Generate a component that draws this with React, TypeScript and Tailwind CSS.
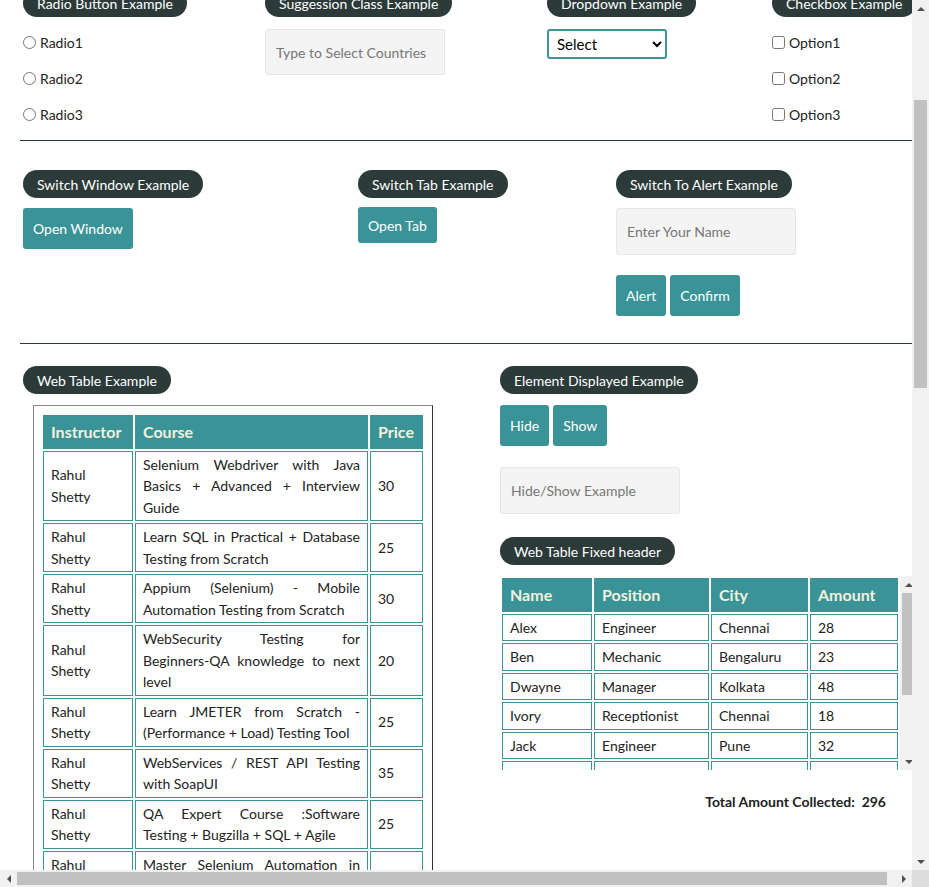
import type { ReactNode } from 'react';

const courses: [string, number][] = [
  ['Selenium Webdriver with Java Basics + Advanced + Interview Guide', 30],
  ['Learn SQL in Practical + Database Testing from Scratch', 25],
  ['Appium (Selenium) - Mobile Automation Testing from Scratch', 30],
  ['WebSecurity Testing for Beginners\u2011QA knowledge to next level', 20],
  ['Learn JMETER from Scratch - (Performance + Load) Testing Tool', 25],
  ['WebServices / REST API Testing with SoapUI', 35],
  ['QA Expert Course :Software Testing + Bugzilla + SQL + Agile', 25],
  ['Master Selenium Automation in simple Python Language', 25],
  ['Advanced Selenium Framework Pageobject, TestNG, Maven, Cucumber', 20],
];

const people: [string, string, string, number][] = [
  ['Alex', 'Engineer', 'Chennai', 28],
  ['Ben', 'Mechanic', 'Bengaluru', 23],
  ['Dwayne', 'Manager', 'Kolkata', 48],
  ['Ivory', 'Receptionist', 'Chennai', 18],
  ['Jack', 'Engineer', 'Pune', 32],
  ['Joe', 'Postman', 'Chennai', 46],
  ['Raymond', 'Businessman', 'Mumbai', 37],
];

function Pill({ children }: { children: ReactNode }) {
  return (
    <div className="inline-flex h-[28px] items-center whitespace-nowrap rounded-full bg-[#2c3a3a] px-[14px] text-white">
      {children}
    </div>
  );
}

function Btn({ children, h = 'h-[41px]' }: { children: ReactNode; h?: string }) {
  return (
    <button className={`${h} rounded-[3px] bg-[#3a9396] px-[10px] text-white`}>{children}</button>
  );
}

function Field({ placeholder, h = 'h-[47px]' }: { placeholder: string; h?: string }) {
  return (
    <input
      placeholder={placeholder}
      className={`${h} w-[180px] rounded-[3px] border border-[#e6e6e6] bg-[#f4f4f4] px-[10px] outline-none placeholder:text-[#777]`}
    />
  );
}

function Arrow({ dir }: { dir: 'up' | 'down' | 'left' | 'right' }) {
  const pts = {
    up: '0,4 4,0 8,4',
    down: '0,0 8,0 4,4',
    left: '4,0 4,8 0,4',
    right: '0,0 4,4 0,8',
  }[dir];
  const vertical = dir === 'up' || dir === 'down';
  return (
    <div className="flex h-[17px] w-[17px] shrink-0 items-center justify-center">
      <svg width={vertical ? 8 : 4} height={vertical ? 4 : 8}>
        <polygon points={pts} fill="#505050" />
      </svg>
    </div>
  );
}

const cell = 'border border-[#3a9396] px-[7px] py-[2px] leading-[21.5px]';
const head = 'border border-[#3a9396] bg-[#3a9396] px-[7px] py-[5px] text-left text-[16px] font-bold leading-[21.5px] text-[#f5f0dc]';

export default function App() {
  return (
    <div className="flex h-[887px] w-[929px] flex-col overflow-hidden bg-white font-['Lato',sans-serif] text-[14px] text-[#222]">
      <div className="flex h-[870px]">
        <div className="w-[912px] overflow-hidden">
          <div className="-mt-[11px] w-[1000px]">
            {/* Radio / Suggestion / Dropdown / Checkbox */}
            <div className="flex h-[151px] pl-[23px]">
              <div className="w-[242px]">
                <Pill>Radio Button Example</Pill>
                <div className="mt-[7px]">
                  {['Radio1', 'Radio2', 'Radio3'].map((r) => (
                    <label key={r} className="flex h-[36px] items-center gap-[4px]">
                      <input type="radio" name="radio" className="m-0 h-[13px] w-[13px]" />
                      {r}
                    </label>
                  ))}
                </div>
              </div>
              <div className="w-[282px]">
                <Pill>Suggession Class Example</Pill>
                <div className="mt-[12px]">
                  <Field placeholder="Type to Select Countries" h="h-[46px]" />
                </div>
              </div>
              <div className="w-[225px]">
                <Pill>Dropdown Example</Pill>
                <div className="mt-[12px]">
                  <select className="h-[30px] w-[120px] rounded-[3px] border-2 border-[#3a9396] bg-white pl-[4px] text-[15px] text-black">
                    <option>Select</option>
                    <option>Option1</option>
                    <option>Option2</option>
                    <option>Option3</option>
                  </select>
                </div>
              </div>
              <div className="w-[200px]">
                <Pill>Checkbox Example</Pill>
                <div className="mt-[7px]">
                  {['Option1', 'Option2', 'Option3'].map((o) => (
                    <label key={o} className="flex h-[36px] items-center gap-[4px]">
                      <input type="checkbox" className="m-0 h-[13px] w-[13px]" />
                      {o}
                    </label>
                  ))}
                </div>
              </div>
            </div>
            <div className="ml-[20px] h-px bg-[#2c3a3a]" />

            {/* Switch window / tab / alert */}
            <div className="flex h-[202px] pl-[23px] pt-[29px]">
              <div className="w-[335px]">
                <Pill>Switch Window Example</Pill>
                <div className="mt-[10px]">
                  <Btn>Open Window</Btn>
                </div>
              </div>
              <div className="w-[258px]">
                <Pill>Switch Tab Example</Pill>
                <div className="mt-[9px]">
                  <Btn h="h-[36px]">Open Tab</Btn>
                </div>
              </div>
              <div className="w-[260px]">
                <Pill>Switch To Alert Example</Pill>
                <div className="mt-[10px]">
                  <Field placeholder="Enter Your Name" />
                </div>
                <div className="mt-[20px] flex gap-[4px]">
                  <Btn>Alert</Btn>
                  <Btn>Confirm</Btn>
                </div>
              </div>
            </div>
            <div className="ml-[20px] h-px bg-[#2c3a3a]" />

            {/* Tables */}
            <div className="flex pl-[23px] pt-[22px]">
              <div className="w-[477px]">
                <Pill>Web Table Example</Pill>
                <div className="ml-[10px] mt-[11px] w-[400px] border border-b-0 border-l-[#8a8a8a] border-r-[#333] border-t-[#8a8a8a] p-[7px]">
                  <table className="w-[384px] table-fixed border-separate border-spacing-[2px]">
                    <colgroup>
                      <col className="w-[90px]" />
                      <col className="w-[233px]" />
                      <col className="w-[53px]" />
                    </colgroup>
                    <thead>
                      <tr>
                        <th className={head}>Instructor</th>
                        <th className={head}>Course</th>
                        <th className={head}>Price</th>
                      </tr>
                    </thead>
                    <tbody>
                      {courses.map(([c, p]) => (
                        <tr key={c}>
                          <td className={cell}>Rahul Shetty</td>
                          <td className={`${cell} text-justify`}>{c}</td>
                          <td className={cell}>{p}</td>
                        </tr>
                      ))}
                    </tbody>
                  </table>
                </div>
              </div>

              <div className="w-[440px]">
                <Pill>Element Displayed Example</Pill>
                <div className="mt-[11px] flex gap-[4px]">
                  <Btn>Hide</Btn>
                  <Btn>Show</Btn>
                </div>
                <div className="mt-[21px]">
                  <Field placeholder="Hide/Show Example" />
                </div>
                <div className="mt-[23px]">
                  <Pill>Web Table Fixed header</Pill>
                </div>
                <div className="mt-[11px] flex h-[194px] w-[417px]">
                  <div className="h-full w-[400px] overflow-hidden">
                    <table className="w-[400px] table-fixed border-separate border-spacing-[2px]">
                      <colgroup>
                        <col className="w-[90px]" />
                        <col className="w-[115px]" />
                        <col className="w-[97px]" />
                        <col className="w-[88px]" />
                      </colgroup>
                      <thead>
                        <tr>
                          <th className={head}>Name</th>
                          <th className={head}>Position</th>
                          <th className={head}>City</th>
                          <th className={head}>Amount</th>
                        </tr>
                      </thead>
                      <tbody>
                        {people.map(([n, pos, city, amt]) => (
                          <tr key={n}>
                            <td className={cell}>{n}</td>
                            <td className={cell}>{pos}</td>
                            <td className={cell}>{city}</td>
                            <td className={cell}>{amt}</td>
                          </tr>
                        ))}
                      </tbody>
                    </table>
                  </div>
                  <div className="flex h-full w-[17px] shrink-0 flex-col bg-[#f1f1f1]">
                    <Arrow dir="up" />
                    <div className="relative flex-1">
                      <div className="absolute left-[2px] right-[2px] top-0 h-[102px] bg-[#c1c1c1]" />
                    </div>
                    <Arrow dir="down" />
                  </div>
                </div>
                <div className="mt-[21px] w-[386px] text-right font-bold leading-[21.5px] text-[#222]">
                  Total Amount Collected:&nbsp; 296
                </div>
              </div>
            </div>
          </div>
        </div>

        {/* page vertical scrollbar */}
        <div className="flex h-full w-[17px] flex-col bg-[#f1f1f1]">
          <Arrow dir="up" />
          <div className="relative flex-1">
            <div className="absolute left-[2px] right-[2px] top-[83px] h-[288px] bg-[#c1c1c1]" />
          </div>
          <Arrow dir="down" />
        </div>
      </div>

      {/* page horizontal scrollbar */}
      <div className="flex h-[17px] bg-[#f1f1f1]">
        <Arrow dir="left" />
        <div className="relative w-[878px]">
          <div className="absolute bottom-[2px] left-0 top-[2px] w-[870px] bg-[#c1c1c1]" />
        </div>
        <Arrow dir="right" />
        <div className="h-[17px] w-[17px] bg-[#dcdcdc]" />
      </div>
    </div>
  );
}
